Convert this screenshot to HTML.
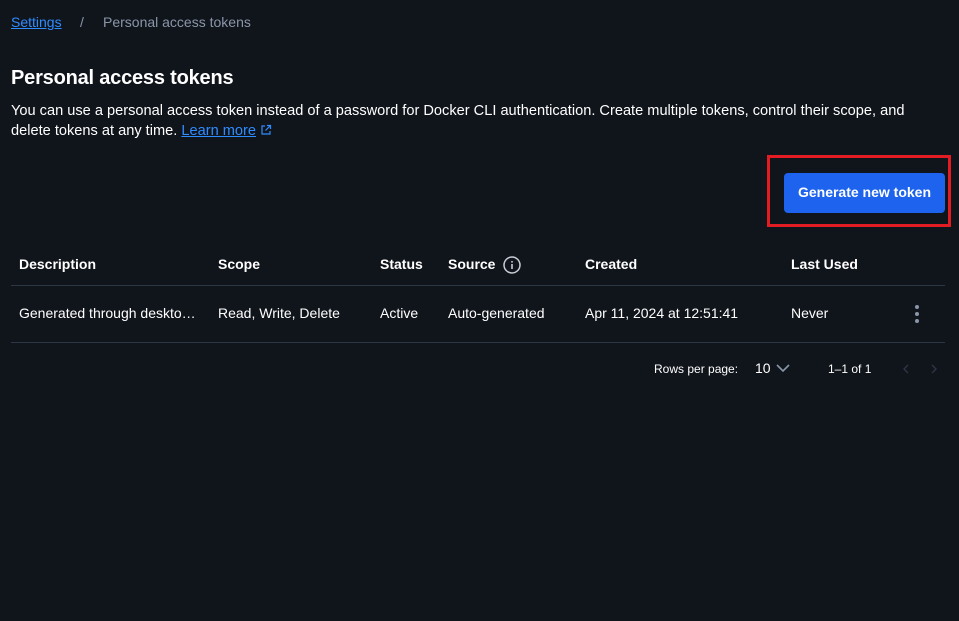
<!DOCTYPE html>
<html><head><style>
body{margin:0;width:959px;height:621px;background:#10141b;font-family:"Liberation Sans",sans-serif;color:#fff;position:relative;overflow:hidden}
.a{position:absolute;white-space:nowrap}
.th{font-weight:bold;font-size:14px;top:256px}
.td{font-size:14px;top:305px}
</style></head><body>
<div class="a" style="left:11px;top:14px;font-size:14px;color:#2f8cff;text-decoration:underline">Settings</div>
<div class="a" style="left:80px;top:14px;font-size:14px;color:#8a96a8">/</div>
<div class="a" style="left:103px;top:14px;font-size:14px;color:#8a96a8">Personal access tokens</div>
<div class="a" style="left:11px;top:67px;font-size:20px;font-weight:bold;letter-spacing:-0.2px">Personal access tokens</div>
<div class="a" style="left:11px;top:101px;font-size:14.6px;line-height:20px">You can use a personal access token instead of a password for Docker CLI authentication. Create multiple tokens, control their scope, and<br>delete tokens at any time. <span style="color:#2f8cff;text-decoration:underline">Learn more</span> <svg width="12" height="12" viewBox="0 0 12 12" style="vertical-align:-1px"><path d="M5 2H2v8h8V7M7 1.5h3.5V5M10.5 1.5L5.5 6.5" stroke="#2f8cff" stroke-width="1.2" fill="none"/></svg></div>
<div class="a" style="left:767px;top:155px;width:178px;height:66px;border:3px solid #e31b23"></div>
<div class="a" style="left:784px;top:173px;width:161px;height:40px;background:#1d63ed;border-radius:4px;font-size:14px;font-weight:bold;text-align:center;line-height:38px">Generate new token</div>
<div class="a th" style="left:19px">Description</div>
<div class="a th" style="left:218px">Scope</div>
<div class="a th" style="left:380px">Status</div>
<div class="a th" style="left:448px">Source</div>
<svg class="a" style="left:503px;top:256px" width="18" height="18" viewBox="0 0 18 18"><circle cx="9" cy="9" r="8" stroke="#c8ced8" stroke-width="1.5" fill="none"/><rect x="8.2" y="8" width="1.6" height="5" fill="#c8ced8"/><rect x="8.2" y="5" width="1.6" height="1.6" fill="#c8ced8"/></svg>
<div class="a th" style="left:585px">Created</div>
<div class="a th" style="left:791px">Last Used</div>
<div class="a" style="left:11px;top:285px;width:934px;height:1px;background:#2d3644"></div>
<div class="a td" style="left:19px">Generated through deskto…</div>
<div class="a td" style="left:218px">Read, Write, Delete</div>
<div class="a td" style="left:380px">Active</div>
<div class="a td" style="left:448px">Auto-generated</div>
<div class="a td" style="left:585px">Apr 11, 2024 at 12:51:41</div>
<div class="a td" style="left:791px">Never</div>
<svg class="a" style="left:913px;top:304px" width="8" height="20"><circle cx="4" cy="3" r="2" fill="#8a96a8"/><circle cx="4" cy="10" r="2" fill="#8a96a8"/><circle cx="4" cy="17" r="2" fill="#8a96a8"/></svg>
<div class="a" style="left:11px;top:342px;width:934px;height:1px;background:#2d3644"></div>
<div class="a" style="left:654px;top:362px;font-size:12px">Rows per page:</div>
<div class="a" style="left:755px;top:360px;font-size:14px">10</div>
<svg class="a" style="left:775px;top:362px" width="16" height="12"><path d="M2 3l6 6 6-6" stroke="#8a96a8" stroke-width="1.6" fill="none"/></svg>
<div class="a" style="left:828px;top:362px;font-size:12px">1–1 of 1</div>
<svg class="a" style="left:902px;top:363px" width="36" height="12"><path d="M6 2L2 6l4 4M30 2l4 4-4 4" stroke="#2d3644" stroke-width="1.4" fill="none"/></svg>
</body></html>
